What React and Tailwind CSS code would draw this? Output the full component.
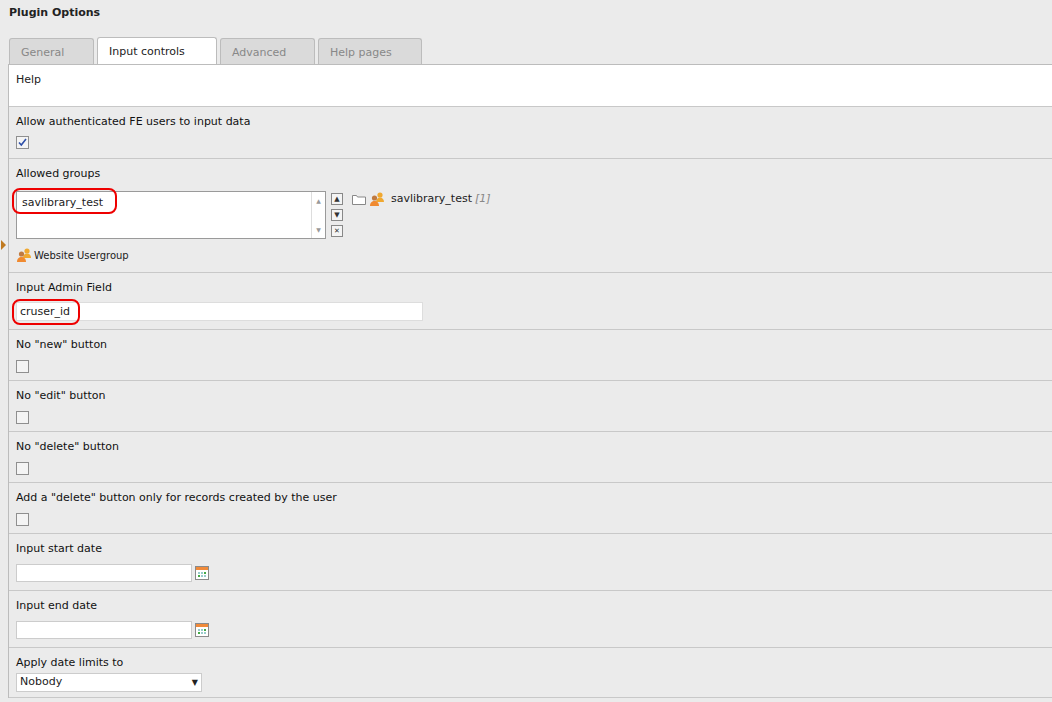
const F = { fontFamily: '"DejaVu Sans", Verdana, sans-serif' };

function Users({ s = 16 }) {
  return (
    <svg width={s} height={s} viewBox="0 0 16 16">
      <circle cx="11" cy="4" r="2.6" fill="#f0a830" />
      <path d="M7 11c0-3 2-4.5 4-4.5s4 1.5 4 4.5z" fill="#f0a830" />
      <circle cx="5.5" cy="7" r="2.6" fill="#c07a40" />
      <path d="M1 15c0-3.5 2-5 4.5-5s4.5 1.5 4.5 5z" fill="#f08a30" />
    </svg>
  );
}
function Cal() {
  return (
    <svg width="14" height="14" viewBox="0 0 14 14">
      <rect x="0.5" y="0.5" width="13" height="13" fill="#fff" stroke="#8a8a8a" />
      <rect x="1" y="1" width="12" height="3" fill="#f08a3a" />
      <rect x="3" y="6" width="2" height="2" fill="#9cc" />
      <rect x="6" y="6" width="2" height="2" fill="#9cc" />
      <rect x="9" y="6" width="2" height="2" fill="#4a4" />
      <rect x="3" y="9" width="2" height="2" fill="#4a4" />
      <rect x="6" y="9" width="2" height="2" fill="#9cc" />
      <rect x="9" y="9" width="2" height="2" fill="#9cc" />
    </svg>
  );
}
function Box({ checked }) {
  return (
    <div className="w-[13px] h-[13px] border border-[#8f8f8f] bg-[#f4f4f4] flex items-center justify-center">
      {checked && (
        <svg width="9" height="9" viewBox="0 0 9 9"><path d="M1 4.5l2.3 2.5L8 1" stroke="#2e4fa8" strokeWidth="1.6" fill="none" /></svg>
      )}
    </div>
  );
}
function Row({ label, children, h, gap = "mt-[8px]" }) {
  return (
    <div className={`border-b border-[#c8c8c8] px-[7px] pt-[8px] ${h}`}>
      <div className="leading-[14px] text-[#111]">{label}</div>
      <div className={gap}>{children}</div>
    </div>
  );
}
const SmallBtn = ({ children }) => (
  <div className="w-[12px] h-[12px] border border-[#888] bg-[#f4f4f4] flex items-center justify-center text-[7px] leading-none text-[#333]">{children}</div>
);

export default function App() {
  return (
    <div style={F} className="w-[1052px] h-[702px] bg-[#ebebeb] text-[11px] text-[#222] overflow-hidden">
      <div className="font-bold text-[11px] px-[9px] pt-[5px] h-[37px]">Plugin Options</div>
      <div className="flex gap-[3px] pl-[9px] h-[27px] items-end">
        {[["General", 85, false], ["Input controls", 120, true], ["Advanced", 95, false], ["Help pages", 104, false]].map(([t, w, a]) => (
          <div key={t} style={{ width: w }} className={`h-[26px] border border-[#bcbcbc] border-b-0 rounded-t-[3px] px-[11px] pt-[6px] ${a ? "bg-white text-[#222] h-[27px]" : "bg-[#dadada] text-[#888]"}`}>{t}</div>
        ))}
      </div>
      <div className="ml-[8px] border-l border-t border-[#bcbcbc] relative">
        <div className="absolute left-[-8px] top-[175px] w-0 h-0 border-y-[5px] border-y-transparent border-l-[5px] border-l-[#c07a20]" />
        <div className="bg-white h-[42px] border-b border-[#c8c8c8] px-[7px] pt-[7px]">Help</div>
        <Row label="Allow authenticated FE users to input data" h="h-[52px]" gap="mt-[7px]"><Box checked /></Row>
        <Row label="Allowed groups" h="h-[114px]" gap="mt-[10px]">
          <div className="flex items-start">
            <div className="relative w-[310px] h-[48px] border border-[#9a9a9a] bg-white flex">
              <div className="flex-1 px-[5px] pt-[3px]">savlibrary_test</div>
              <div className="w-[14px] border-l border-[#ddd] flex flex-col justify-between items-center py-[4px] text-[6px] text-[#999]"><span>▲</span><span>▼</span></div>
              <div className="absolute left-[-5px] top-[-4px] w-[105px] h-[26px] border-2 border-[#e00] rounded-[8px]" />
            </div>
            <div className="ml-[5px] flex flex-col gap-[4px] mt-[2px]">
              <SmallBtn>▲</SmallBtn><SmallBtn>▼</SmallBtn><SmallBtn>✕</SmallBtn>
            </div>
            <div className="ml-[9px] flex items-center gap-[3px]">
              <svg width="14" height="12" viewBox="0 0 14 12"><path d="M0.5 2.5h4l1 1.5h8v7.5h-13z" fill="#fff" stroke="#888" /></svg>
              <Users />
              <span className="ml-[3px]">savlibrary_test</span>
              <span className="text-[#888] italic">[1]</span>
            </div>
          </div>
          <div className="flex items-center gap-[2px] mt-[8px] text-[10px]"><Users /> Website Usergroup</div>
        </Row>
        <Row label="Input Admin Field" h="h-[57px]" gap="mt-[7px]">
          <div className="relative w-[407px] h-[19px] border border-[#ddd] bg-white px-[3px] leading-[17px]">
            cruser_id
            <div className="absolute left-[-5px] top-[-4px] w-[68px] h-[26px] border-2 border-[#e00] rounded-[8px]" />
          </div>
        </Row>
        <Row label={'No "new" button'} h="h-[51px]"><Box /></Row>
        <Row label={'No "edit" button'} h="h-[51px]"><Box /></Row>
        <Row label={'No "delete" button'} h="h-[51px]"><Box /></Row>
        <Row label={'Add a "delete" button only for records created by the user'} h="h-[51px]"><Box /></Row>
        <Row label="Input start date" h="h-[57px]">
          <div className="flex items-center gap-[3px]"><div className="w-[176px] h-[18px] border border-[#ccc] bg-white" /><Cal /></div>
        </Row>
        <Row label="Input end date" h="h-[57px]">
          <div className="flex items-center gap-[3px]"><div className="w-[176px] h-[18px] border border-[#ccc] bg-white" /><Cal /></div>
        </Row>
        <Row label="Apply date limits to" h="h-[50px]" gap="mt-[3px]">
          <div className="w-[186px] h-[19px] border border-[#ccc] bg-white flex items-center justify-between px-[3px]">
            <span>Nobody</span><span className="text-[8px]">▼</span>
          </div>
        </Row>
      </div>
    </div>
  );
}
